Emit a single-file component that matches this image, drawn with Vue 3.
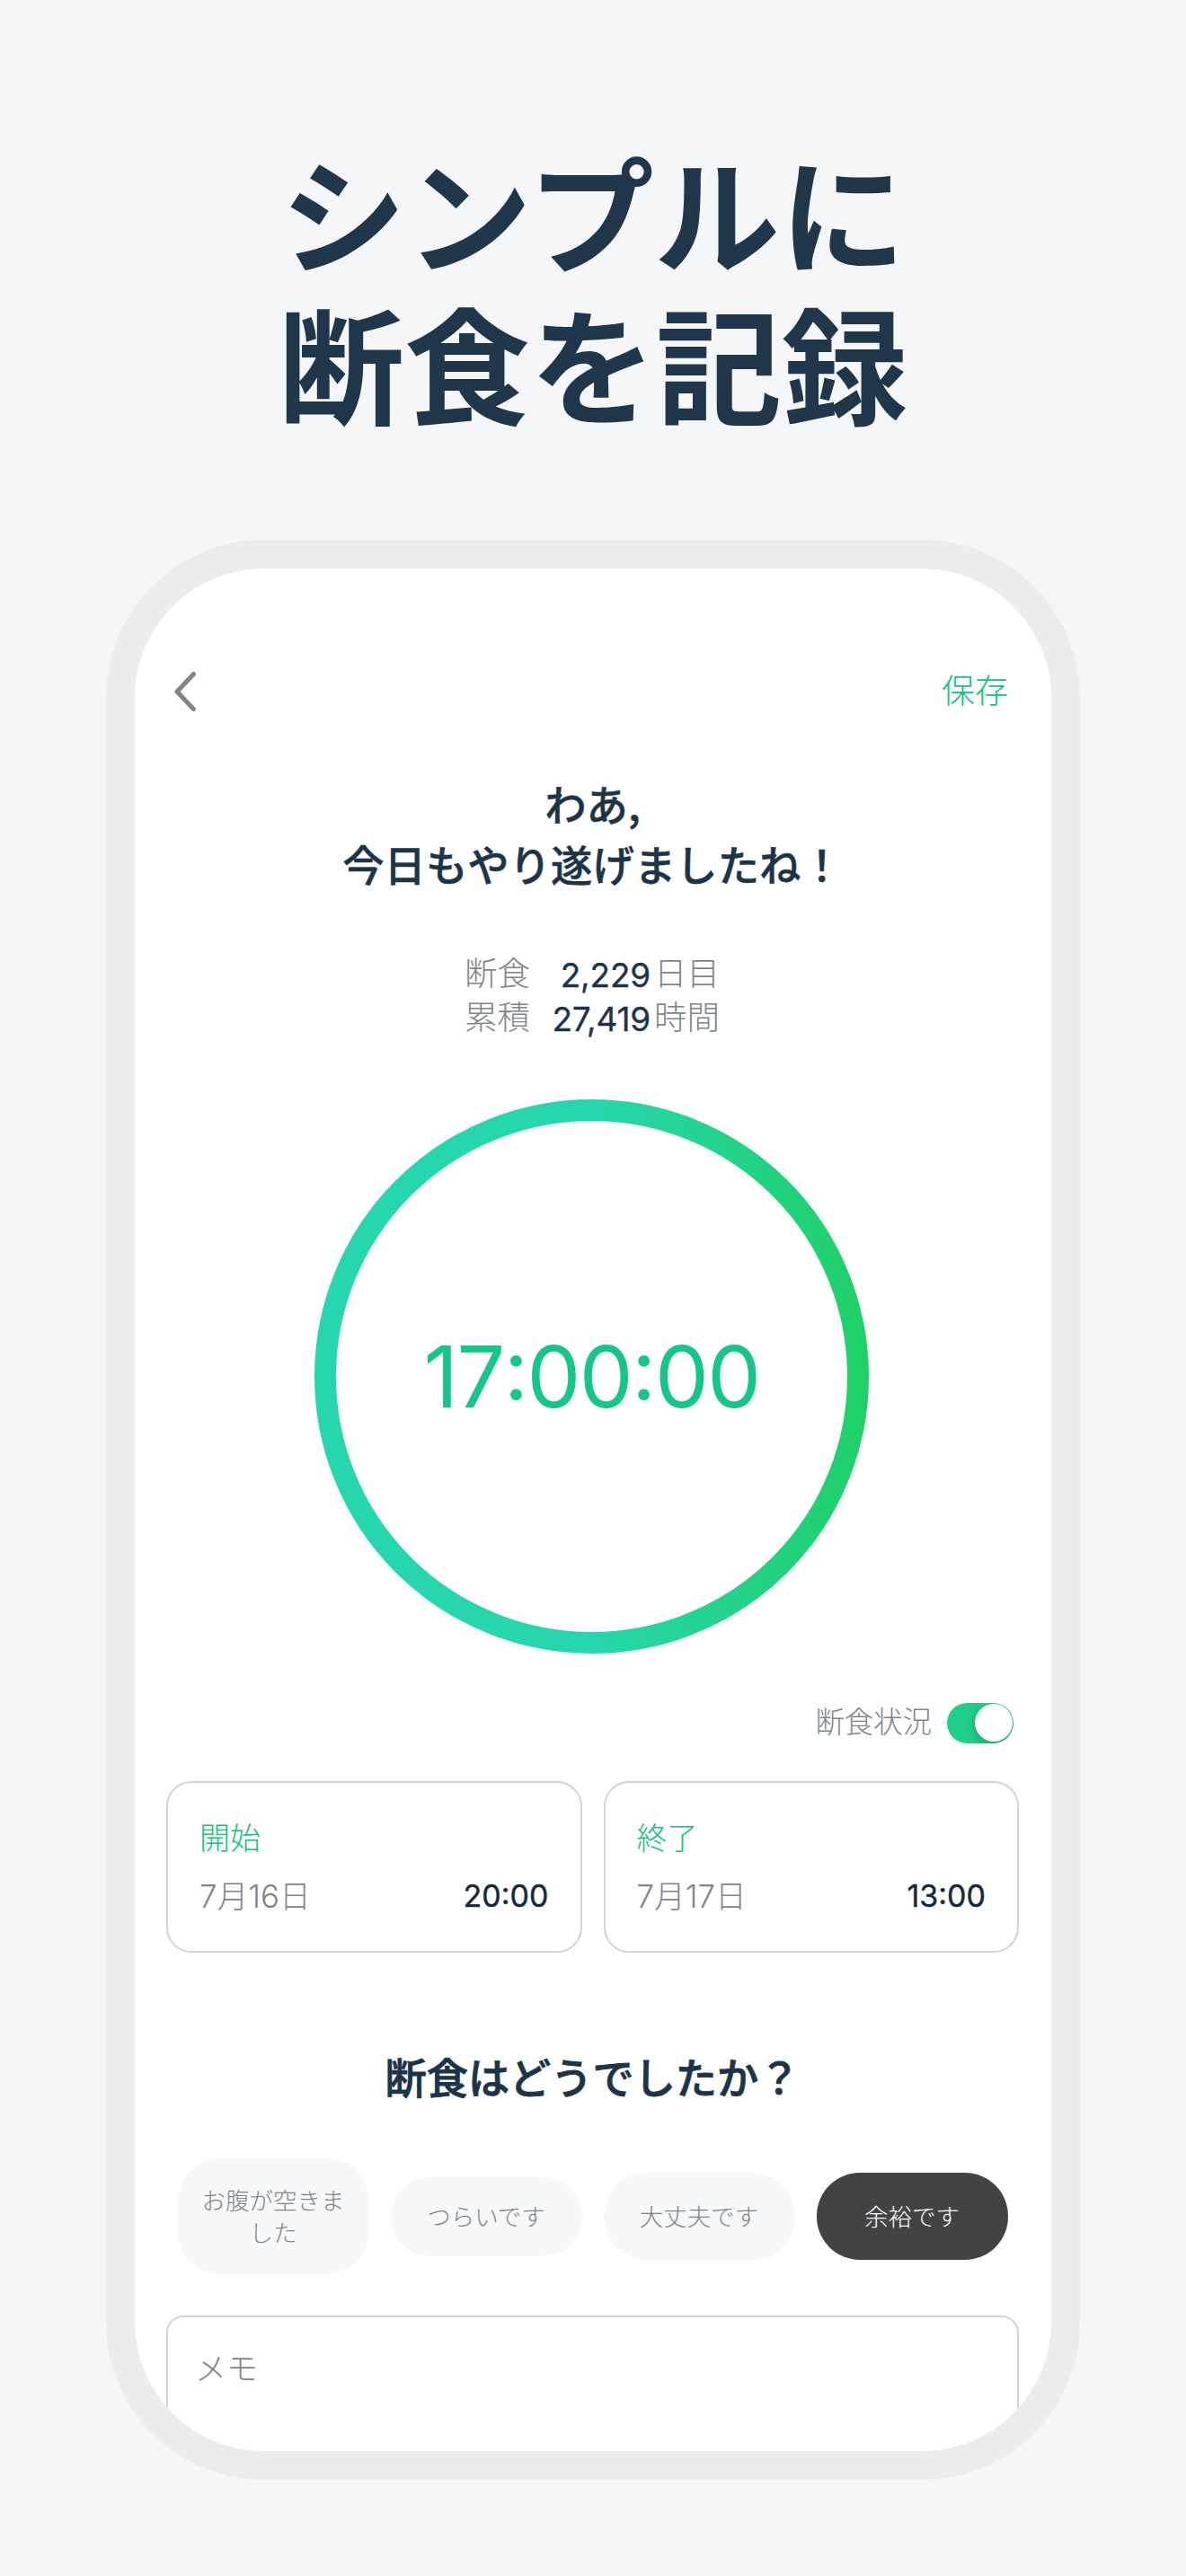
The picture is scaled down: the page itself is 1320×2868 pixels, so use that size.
<script setup>
import { ref } from 'vue'

const isOn = ref(true)
const selected = ref(3)

const stats = [
  { label: '断食', value: '2,229', unit: '日目' },
  { label: '累積', value: '27,419', unit: '時間' },
]

const times = [
  { label: '開始', month: '7', day: '16', hour: '20', minute: '00' },
  { label: '終了', month: '7', day: '17', hour: '13', minute: '00' },
]

const moods = [
  { text: 'お腹が空きました', size: 'tall' },
  { text: 'つらいです', size: 'short' },
  { text: '大丈夫です', size: 'normal' },
  { text: '余裕です', size: 'normal' },
]
</script>

<template>
  <main class="page">
    <h1 class="headline">シンプルに<br />断食を記録</h1>

    <section class="phone">
      <header class="nav">
        <svg class="back" viewBox="0 0 26 46" aria-hidden="true">
          <path d="M22.5 3.5 L4 23 L22.5 42.5" />
        </svg>
        <button class="save">保存</button>
      </header>

      <h2 class="cheer">わあ,<br />今日もやり遂げましたね！</h2>

      <div class="stats">
        <div v-for="stat in stats" :key="stat.label" class="stat">
          <span class="stat-label">{{ stat.label }}</span>
          <span class="stat-value">{{ stat.value }}</span>
          <span class="stat-unit">{{ stat.unit }}</span>
        </div>
      </div>

      <div class="timer">
        <svg class="ring" viewBox="0 0 617 617" aria-hidden="true">
          <defs>
            <linearGradient id="ringColor" gradientUnits="userSpaceOnUse" x1="0" y1="0" x2="617" y2="0">
              <stop offset="0.5" stop-color="#26d7ae" />
              <stop offset="0.82" stop-color="#22d281" />
              <stop offset="1" stop-color="#20d066" />
            </linearGradient>
          </defs>
          <circle cx="308.5" cy="308.5" r="296.5" />
        </svg>
        <span class="elapsed">17<span class="colon">:</span>00<span class="colon">:</span>00</span>
      </div>

      <div class="status">
        <span>断食状況</span>
        <button class="toggle" :class="{ on: isOn }" aria-label="断食状況" @click="isOn = !isOn">
          <i class="knob"></i>
        </button>
      </div>

      <div class="cards">
        <article v-for="item in times" :key="item.label" class="card">
          <div class="card-label">{{ item.label }}</div>
          <div class="card-row">
            <span class="date">{{ item.month }}月{{ item.day }}日</span>
            <span class="time">{{ item.hour }}<span class="colon">:</span>{{ item.minute }}</span>
          </div>
        </article>
      </div>

      <h3 class="question">断食はどうでしたか？</h3>

      <div class="moods">
        <button
          v-for="(mood, index) in moods"
          :key="mood.text"
          class="mood"
          :class="[mood.size, { check: selected === index }]"
          @click="selected = index"
        >
          {{ mood.text }}
        </button>
      </div>

      <div class="memo">メモ</div>
    </section>
  </main>
</template>

<style>
body {
  background: #f4f6f8;
}
</style>

<style scoped>
.page {
  width: 1320px;
  height: 2868px;
  box-sizing: border-box;
  padding-top: 149px;
  background: #f4f6f8;
  color: #1d3448;
  font-family: Inter, 'Noto Sans CJK JP', sans-serif;
  overflow: hidden;
}
.headline {
  margin: 0 0 116px;
  height: 336px;
  color: #20364a;
  font-family: 'Noto Sans CJK JP', sans-serif;
  font-size: 140px;
  font-weight: 700;
  line-height: 168px;
  text-align: center;
}
button {
  border: none;
  padding: 0;
  background: none;
  font-family: inherit;
}
.phone {
  box-sizing: border-box;
  width: 1084px;
  height: 2160px;
  margin: 0 auto;
  border: 32px solid #ebedef;
  border-radius: 176px;
  padding: 111px 36px 0 35px;
  background: #ffffff;
  overflow: hidden;
  display: flex;
  flex-direction: column;
}
.nav {
  flex: none;
  display: flex;
  justify-content: space-between;
  align-items: center;
  height: 52px;
  padding: 0 12px 0 8px;
}
.back {
  width: 26px;
  height: 46px;
  fill: none;
  stroke: #7f8587;
  stroke-width: 5;
  stroke-linecap: round;
  stroke-linejoin: round;
}
.save {
  color: #12c27d;
  font-size: 37px;
  font-weight: 300;
  line-height: 52px;
}
.cheer {
  flex: none;
  height: 134px;
  margin: 64px 0 0;
  font-family: 'Noto Sans CJK JP', sans-serif;
  font-size: 46.4px;
  font-weight: 500;
  line-height: 67px;
  text-align: center;
  -webkit-text-stroke: 0.5px currentColor;
}
.stats {
  flex: none;
  margin: 66px 0 0 332px;
}
.stat {
  display: flex;
  align-items: center;
  height: 49px;
  color: #7f8689;
  font-size: 36.5px;
  font-weight: 300;
  line-height: 49px;
}
.stat-label {
  width: 73px;
}
.stat-value {
  width: 134px;
  padding-top: 2px;
  color: #1d3448;
  font-size: 37px;
  font-weight: 400;
  letter-spacing: -0.2px;
  text-align: right;
  -webkit-text-stroke: 0.3px currentColor;
}
.stat-unit {
  margin-left: 4px;
}
.timer {
  flex: none;
  position: relative;
  width: 617px;
  height: 617px;
  margin: 66px 0 0 165px;
  display: flex;
  align-items: center;
  justify-content: center;
}
.ring {
  position: absolute;
  inset: 0;
}
.ring circle {
  fill: none;
  stroke: url(#ringColor);
  stroke-width: 24;
}
.elapsed {
  color: #15c58b;
  font-size: 95px;
  font-weight: 400;
  line-height: 120px;
  letter-spacing: -1.6px;
}
/* centre the colon on the digits */
.colon {
  line-height: 0;
  vertical-align: 0.095em;
}
.status {
  flex: none;
  height: 46px;
  margin-top: 54px;
  padding-right: 6px;
  display: flex;
  justify-content: flex-end;
  align-items: center;
  gap: 17px;
  color: #7f8689;
  font-size: 32.4px;
  font-weight: 300;
  line-height: 46px;
}
.toggle {
  box-sizing: border-box;
  display: flex;
  width: 74px;
  height: 45px;
  padding: 1.5px;
  border-radius: 23px;
  background: #cdd3d7;
  overflow: hidden;
}
.toggle.on {
  justify-content: flex-end;
  background: #22cf8a;
}
.knob {
  width: 42px;
  height: 42px;
  border-radius: 50%;
  background: #ffffff;
  box-shadow: -1px 3px 10px rgba(0, 60, 30, 0.3);
}
.cards {
  flex: none;
  display: flex;
  gap: 24px;
  margin-top: 42px;
}
.card {
  flex: 1;
  box-sizing: border-box;
  height: 191px;
  border: 2px solid #cfd4d8;
  border-radius: 28px;
  padding: 37px 35px 0;
}
.card-label {
  color: #12c27d;
  font-size: 34px;
  font-weight: 300;
  line-height: 50px;
}
.card-row {
  display: flex;
  justify-content: space-between;
  align-items: center;
  margin-top: 14px;
  line-height: 50px;
}
.date {
  color: #7f8689;
  font-size: 34.8px;
  font-weight: 300;
}
.time {
  color: #14293d;
  font-size: 34px;
  font-weight: 400;
  -webkit-text-stroke: 0.4px currentColor;
}
.question {
  flex: none;
  margin: 102px 0 0;
  height: 70px;
  font-family: 'Noto Sans CJK JP', sans-serif;
  font-size: 46.2px;
  font-weight: 500;
  line-height: 70px;
  text-align: center;
  -webkit-text-stroke: 0.9px currentColor;
}
.moods {
  flex: none;
  display: flex;
  align-items: center;
  justify-content: center;
  gap: 24px;
  height: 129px;
  margin-top: 57px;
}
.mood {
  box-sizing: border-box;
  width: 213px;
  border-radius: 48px;
  padding: 0 26px;
  background: #f7f8fa;
  color: #7f8689;
  font-size: 26.5px;
  font-weight: 300;
  line-height: 36px;
}
.mood.tall {
  height: 129px;
}
.mood.short {
  height: 88px;
}
.mood.normal {
  height: 97px;
}
.mood.check {
  background: #434343;
  color: #ffffff;
}
.memo {
  flex: none;
  box-sizing: border-box;
  height: 300px;
  margin-top: 46px;
  border: 2px solid #cfd4d8;
  border-radius: 19px;
  padding: 31px 30px;
  color: #7f8689;
  font-size: 35px;
  font-weight: 300;
  line-height: 52px;
}
</style>
